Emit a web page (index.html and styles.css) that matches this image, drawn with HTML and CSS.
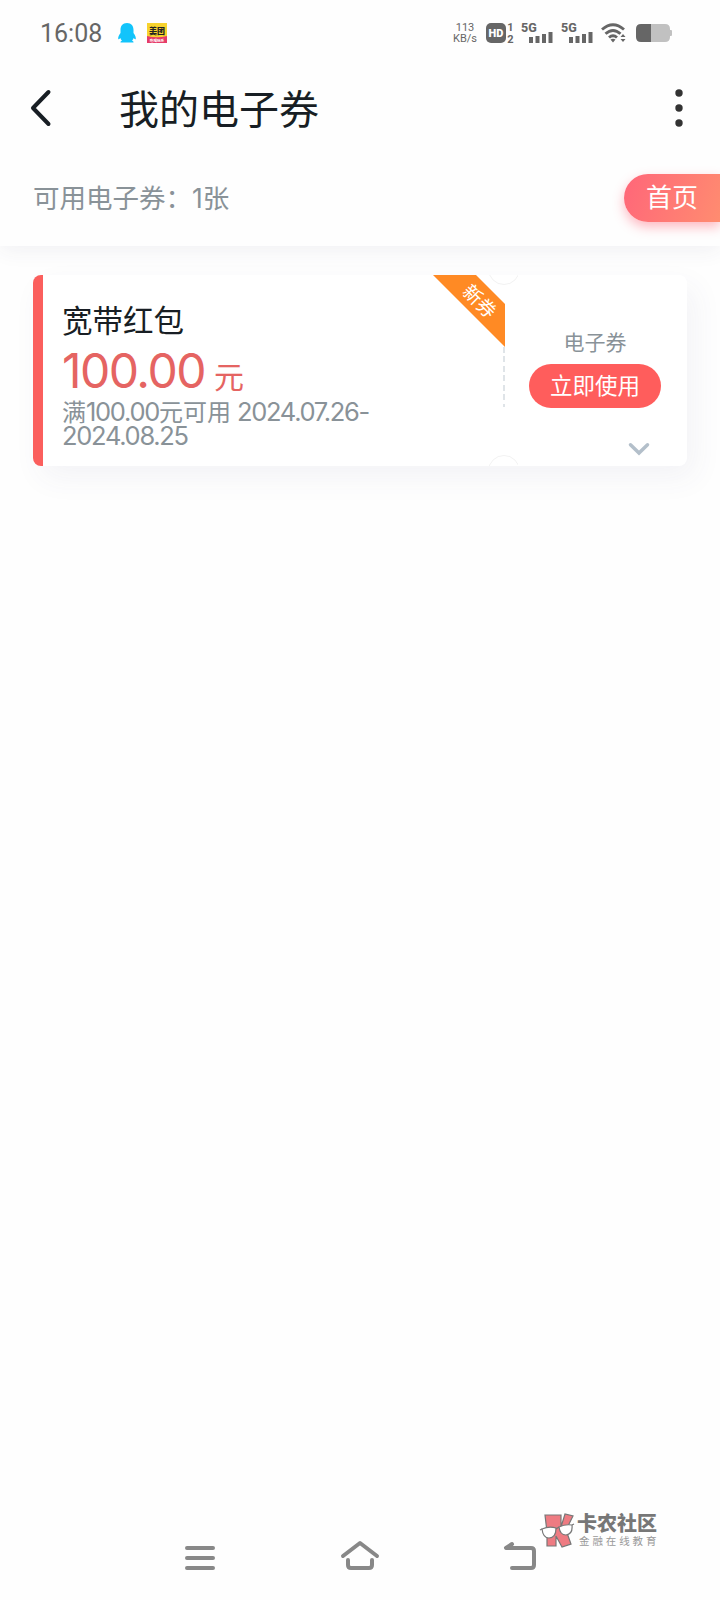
FILE: index.html
```
<!DOCTYPE html>
<html lang="zh-CN">
<head>
  <meta charset="UTF-8">
  <meta name="viewport" content="width=device-width, initial-scale=1">
  <title>我的电子券</title>
  <link rel="stylesheet" href="styles.css">
</head>
<body>
<div class="status-bar">
  <span class="time">16:08</span>
  <svg class="qq" width="20" height="22" viewBox="0 0 20 22">
    <path fill="#12c4fb" d="M10 1C5.500 1 3.500 4 3.500 8v3C2 13 1 15 1.200 17c.7.700 1.500-.3 2.200-1 .3 1.300.8 2 1.600 2.600-1 .5-1.500 1-1.500 1.800h13c0-.8-.5-1.300-1.500-1.800.8-.6 1.300-1.300 1.600-2.600.7.700 1.500 1.700 2.200 1 .2-2-.8-4-2.300-6V8C16.500 4 14.500 1 10 1z"/>
  </svg>
  <svg class="meituan" width="20" height="20" viewBox="0 0 20 20">
    <rect width="20" height="20" fill="#f7d32e"/>
    <path fill="#e63c68" d="M0 13q10 2.500 20 0v7H0z"/>
    <text class="dark" x="10" y="11.300" font-size="8" font-weight="900" text-anchor="middle">美团</text>
    <text class="light" x="10" y="18.800" font-size="3.600" font-weight="700" text-anchor="middle">吃喝玩乐</text>
  </svg>

  <div class="status-right">
    <div class="speed"><span>113</span><span>KB/s</span></div>
    <svg class="hd" width="29" height="22" viewBox="0 0 29 22">
      <rect x="0" y="1" width="20" height="20" rx="5" fill="#666"/>
      <text class="light" x="10" y="15" font-size="11" font-weight="900" text-anchor="middle">HD</text>
      <text x="24.500" y="9" font-size="11" font-weight="700" text-anchor="middle">1</text>
      <text x="24.500" y="21" font-size="11" font-weight="700" text-anchor="middle">2</text>
    </svg>
    <svg class="signal" width="33" height="22" viewBox="0 0 33 22">
      <text x="0" y="10.300" font-size="12.500" font-weight="800">5G</text>
      <path stroke="#666" stroke-width="4" d="M10 15v6M16.500 14v7M23 12v9M29.500 10v11"/>
    </svg>
    <svg class="signal" width="33" height="22" viewBox="0 0 33 22">
      <text x="0" y="10.300" font-size="12.500" font-weight="800">5G</text>
      <path stroke="#666" stroke-width="4" d="M10 15v6M16.500 14v7M23 12v9M29.500 10v11"/>
    </svg>
    <svg class="wifi" width="25" height="20" viewBox="0 0 25 20">
      <g fill="none" stroke="#666" stroke-width="2.900">
        <path d="M1 6.500Q12 -3 23 6.500"/>
        <path d="M4.500 10.800Q12 4 19.500 10.800"/>
        <path d="M8 14.500Q12 11 16 14.500"/>
      </g>
      <path fill="#666" d="M9.500 16.500q2.500-1.500 5 0L12 19.500zM19.500 14l2.500-3 2.500 3zM19.500 16l2.500 3 2.500-3z"/>
    </svg>
    <svg class="battery" width="36" height="18" viewBox="0 0 36 18">
      <path fill="#c1c1c1" d="M15 0h14q5 0 5 5v1h1q1 0 1 1v4q0 1-1 1h-1v1q0 5-5 5H15z"/>
      <path fill="#666" d="M5 0h10v18H5q-5 0-5-5V5q0-5 5-5z"/>
    </svg>
  </div>
</div>

<header class="nav-bar">
  <svg class="back" width="22" height="38" viewBox="0 0 22 38">
    <path d="M18.500 3L3 19l15.500 16"/>
  </svg>
  <h1>我的电子券</h1>
  <svg class="more" width="8" height="38" viewBox="0 0 8 38">
    <circle cx="4" cy="4" r="3.700"/>
    <circle cx="4" cy="19" r="3.700"/>
    <circle cx="4" cy="34" r="3.700"/>
  </svg>
</header>

<div class="summary">
  <span class="total">可用电子券：<span class="count">1</span>张</span>
  <a class="home-btn">首页</a>
</div>

<div class="coupon">
  <div class="coupon-main">
    <div class="coupon-name">宽带红包</div>
    <div class="coupon-amount">100.00<span class="unit">元</span></div>
    <div class="coupon-desc">
      <div>满<span class="num">100.00</span>元可用 <span class="num">2024.07.26-</span></div>
      <div><span class="num">2024.08.25</span></div>
    </div>
  </div>
  <div class="coupon-side">
    <div class="coupon-type">电子券</div>
    <a class="use-btn">立即使用</a>
    <svg class="arrow" width="20" height="13" viewBox="0 0 20 13">
      <path d="M1.500 1.800L10 10l8.500-8.200"/>
    </svg>
  </div>
  <div class="divider"></div>
  <div class="notch notch-top"></div>
  <div class="notch notch-bottom"></div>
  <div class="ribbon"><span>新券</span></div>
</div>

<footer class="sys-nav">
  <svg width="40" height="32" viewBox="0 0 40 32">
    <path d="M7 8h26M7 18h26M7 28h26"/>
  </svg>
  <svg width="40" height="32" viewBox="0 0 40 32">
    <path d="M3 16L20 3l17 13M8 20v5q0 3 3 3h18q3 0 3-3v-5"/>
  </svg>
  <svg width="40" height="32" viewBox="0 0 40 32">
    <path d="M12 4L6 8h25q3 0 3 3v14q0 3-3 3H12"/>
  </svg>
</footer>

<div class="watermark">
  <svg width="36" height="37" viewBox="0 0 36 37">
    <path fill="#ee7b82" stroke="#777" stroke-width="1.200" d="M5 3h16v12l4-13 8 2-7 14 5 14-9 3-6-11v10H7V20z"/>
    <g fill="#fff" stroke="#777" stroke-width="1.200">
      <path d="M2 17q7-3 14-1 0 10-7 10-6 0-7-9z"/>
      <path d="M19 15q6-3 13-2 1 9-6 10-6 0-7-8z"/>
      <path d="M16 17l3-2M2 17l-2 1M32 13l2-1"/>
    </g>
  </svg>
  <div class="watermark-text">
    <strong>卡农社区</strong>
    <span>金融在线教育</span>
  </div>
</div>
</body>
</html>
```
FILE: styles.css
```
* {
  box-sizing: border-box;
}

body {
  margin: 0;
  height: 1600px;
  display: flex;
  flex-direction: column;
  position: relative;
  background: #fefefe;
  font-family: Roboto, 'Noto Sans CJK SC', sans-serif;
  color: #181e24;
  overflow: hidden;
}

svg {
  display: block;
  flex: none;
  overflow: visible;
}

svg text {
  fill: #666;
}

svg .dark {
  fill: #222;
}

svg .light {
  fill: #fff;
}

/* status bar */
.status-bar {
  height: 66px;
  display: flex;
  align-items: center;
  padding: 0 48px 0 40px;
}

.time {
  width: 77px;
  padding-top: 1px;
  font-size: 25px;
  color: #666;
}

.meituan {
  margin-left: 10px;
}

.status-right {
  margin-left: auto;
  display: flex;
  align-items: center;
}

.speed {
  width: 24px;
  display: flex;
  flex-direction: column;
  align-items: center;
  font-size: 11px;
  line-height: 11px;
  color: #666;
  margin-right: 9px;
}

.hd {
  margin-right: 6px;
}

.signal {
  margin-right: 7px;
}

.wifi {
  margin-right: 10px;
}

/* title */
.nav-bar {
  height: 86px;
  display: flex;
  align-items: center;
  padding: 0 37px 2px 30px;
  position: relative;
  z-index: 1;
  background: #fefefe;
}

.back path {
  fill: none;
  stroke: #181e24;
  stroke-width: 4;
  stroke-linecap: round;
  stroke-linejoin: round;
}

.nav-bar h1 {
  margin: 5px 0 0 67px;
  font-size: 40px;
  font-weight: 400;
  line-height: 60px;
}

.more {
  margin-left: auto;
  fill: #333;
}

.summary {
  height: 94px;
  display: flex;
  align-items: center;
  justify-content: space-between;
  padding: 0 0 2px 33px;
  background: #fefefe;
  font-size: 26.500px;
  color: #899298;
  box-shadow: 0 4px 20px rgba(60, 60, 100, 0.07);
}

.total {
  padding-bottom: 4px;
}

.count {
  font-family: Inter, sans-serif;
}

.home-btn {
  width: 96px;
  height: 48px;
  padding-left: 22px;
  border-radius: 24px 0 0 24px;
  background: linear-gradient(110deg, #ff6679, #ff8c70);
  box-shadow: 0 5px 12px rgba(255, 100, 120, 0.45);
  font-size: 26px;
  line-height: 48px;
  color: #fff;
}

/* coupon */
.coupon {
  position: relative;
  display: flex;
  width: 654px;
  height: 191px;
  margin: 29px 0 0 33px;
  border-left: 10px solid #fb5f5d;
  border-radius: 8px;
  background: #fff;
  box-shadow: 8px 12px 30px rgba(60, 60, 120, 0.06);
}

.coupon-main {
  width: 461px;
  padding: 27px 0 0 19px;
}

.coupon-name {
  font-size: 30.500px;
  line-height: 40px;
}

.coupon-amount {
  height: 58px;
  font-family: Inter, 'Noto Sans CJK SC', sans-serif;
  font-size: 48px;
  line-height: 58px;
  letter-spacing: -1.500px;
  color: #e56462;
}

.unit {
  margin-left: 9px;
  font-size: 30px;
}

.coupon-desc {
  font-size: 24px;
  line-height: 24px;
  color: #899298;
}

.coupon-desc div {
  height: 24px;
  white-space: nowrap;
}

.num {
  font-family: Inter, sans-serif;
  font-size: 25.500px;
  letter-spacing: -1.300px;
}

.coupon-side {
  flex: 1;
  display: flex;
  flex-direction: column;
  align-items: center;
  padding: 53px 1px 0 0;
}

.coupon-type {
  font-size: 21px;
  line-height: 30px;
  color: #899298;
}

.use-btn {
  width: 132px;
  height: 44px;
  margin-top: 6px;
  border-radius: 22px;
  background: #ff5d5c;
  font-size: 22.500px;
  line-height: 45px;
  text-align: center;
  color: #fff;
}

.arrow {
  margin: 35px 0 0 87px;
}

.arrow path {
  fill: none;
  stroke: #b3bfca;
  stroke-width: 3.500;
  stroke-linecap: round;
}

.divider {
  position: absolute;
  left: 460px;
  top: 72px;
  width: 2px;
  height: 60px;
  background: repeating-linear-gradient(#dfe4e8 0 6px, transparent 6px 9.500px);
}

.notch {
  position: absolute;
  left: 445px;
  width: 30px;
  height: 11px;
  overflow: hidden;
}

.notch::before {
  content: "";
  position: absolute;
  left: 0;
  width: 30px;
  height: 30px;
  border: 1px solid #f2f2f2;
  border-radius: 50%;
}

.notch-top {
  top: 0;
}

.notch-top::before {
  bottom: 1px;
}

.notch-bottom {
  bottom: 0;
}

.notch-bottom::before {
  top: 0;
}

.ribbon {
  position: absolute;
  left: 390px;
  top: 0;
  width: 72px;
  height: 72px;
  background: #ff8a24;
  clip-path: polygon(0 0, 43px 0, 100% 29px, 100% 100%);
}

.ribbon span {
  position: absolute;
  left: 26px;
  top: 15px;
  width: 40px;
  font-size: 19px;
  line-height: 24px;
  text-align: center;
  color: #fff;
  transform: rotate(45deg);
}

/* system keys */
.sys-nav {
  display: flex;
  justify-content: center;
  gap: 120px;
  margin-top: auto;
  padding-bottom: 28px;
}

.sys-nav path {
  fill: none;
  stroke: #888;
  stroke-width: 4;
  stroke-linecap: round;
  stroke-linejoin: round;
}

.watermark {
  position: absolute;
  left: 540px;
  top: 1512px;
  display: flex;
}

.watermark-text {
  display: flex;
  flex-direction: column;
  margin: 1px 0 0 1px;
  color: #777;
}

.watermark-text strong {
  font-size: 20px;
  font-weight: 900;
  line-height: 23px;
}

.watermark-text span {
  margin-left: 2px;
  font-size: 10.500px;
  line-height: 12px;
  letter-spacing: 2.900px;
  color: #999;
}
```
